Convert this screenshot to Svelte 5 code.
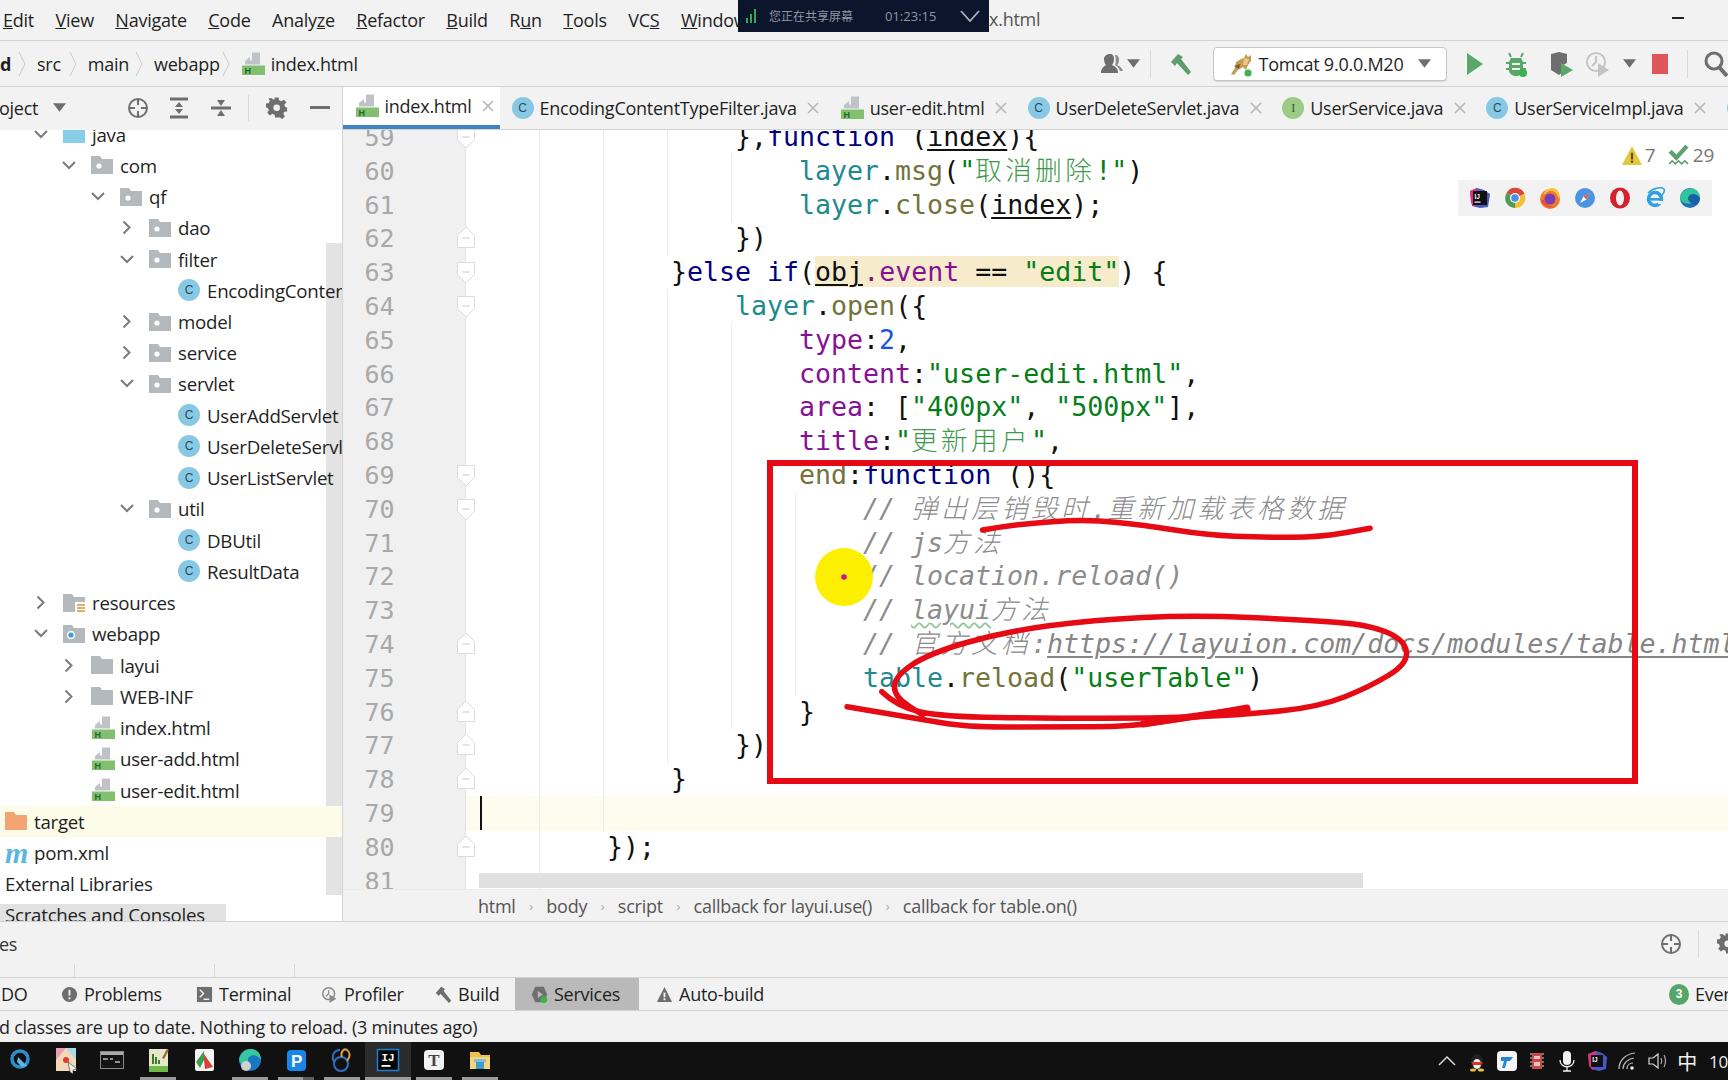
<script>
  const menu = [['Edit',0],['View',0],['Navigate',0],['Code',0],['Analyze',5],['Refactor',0],['Build',0],['Run',1],['Tools',0],['VCS',2],['Window',0]];
  const tabs = [
    {k:'h',t:'index.html',active:true},
    {k:'c',t:'EncodingContentTypeFilter.java'},
    {k:'h',t:'user-edit.html'},
    {k:'c',t:'UserDeleteServlet.java'},
    {k:'i',t:'UserService.java'},
    {k:'c',t:'UserServiceImpl.java'},
    {k:'c',t:''}
  ];
  const tree = [
    {x:63,i:'java',t:'java',c:'o'},
    {x:91,i:'pkg',t:'com',c:'o'},
    {x:120,i:'pkg',t:'qf',c:'o'},
    {x:149,i:'pkg',t:'dao',c:'c'},
    {x:149,i:'pkg',t:'filter',c:'o'},
    {x:178,i:'cls',t:'EncodingContentTypeFilter'},
    {x:149,i:'pkg',t:'model',c:'c'},
    {x:149,i:'pkg',t:'service',c:'c'},
    {x:149,i:'pkg',t:'servlet',c:'o'},
    {x:178,i:'cls',t:'UserAddServlet'},
    {x:178,i:'cls',t:'UserDeleteServlet'},
    {x:178,i:'cls',t:'UserListServlet'},
    {x:149,i:'pkg',t:'util',c:'o'},
    {x:178,i:'cls',t:'DBUtil'},
    {x:178,i:'cls',t:'ResultData'},
    {x:63,i:'res',t:'resources',c:'c'},
    {x:63,i:'web',t:'webapp',c:'o'},
    {x:91,i:'dir',t:'layui',c:'c'},
    {x:91,i:'dir',t:'WEB-INF',c:'c'},
    {x:91,i:'html',t:'index.html'},
    {x:91,i:'html',t:'user-add.html'},
    {x:91,i:'html',t:'user-edit.html'},
    {x:5,i:'target',t:'target',sel:true},
    {x:5,i:'pom',t:'pom.xml'},
    {x:5,t:'External Libraries'},
    {x:5,t:'Scratches and Consoles',scratch:true}
  ];
  const lines = [
    {n:59,col:16,f:'d',g:[4,8,12],s:[['p','},'],['k','function'],['p',' ('],['u','index'],['p','){']]},
    {n:60,col:20,g:[4,8,12,16],s:[['v','layer'],['p','.'],['m','msg'],['p','('],['st','"'],['cs','取消删除'],['st','!"'],['p',')']]},
    {n:61,col:20,g:[4,8,12,16],s:[['v','layer'],['p','.'],['m','close'],['p','('],['u','index'],['p',');']]},
    {n:62,col:16,f:'u',g:[4,8,12],s:[['p','})']]},
    {n:63,col:12,f:'d',g:[4,8],s:[['p','}'],['k','else if'],['p','('],['hu','obj'],['hp','.event'],['h',' == '],['hs','"edit"'],['p',') {']]},
    {n:64,col:16,f:'d',g:[4,8,12],s:[['v','layer'],['p','.'],['m','open'],['p','({']]},
    {n:65,col:20,g:[4,8,12,16],s:[['pr','type'],['p',':'],['n2','2'],['p',',']]},
    {n:66,col:20,g:[4,8,12,16],s:[['pr','content'],['p',':'],['st','"user-edit.html"'],['p',',']]},
    {n:67,col:20,g:[4,8,12,16],s:[['pr','area'],['p',': ['],['st','"400px"'],['p',', '],['st','"500px"'],['p','],']]},
    {n:68,col:20,g:[4,8,12,16],s:[['pr','title'],['p',':'],['st','"'],['cs','更新用户'],['st','"'],['p',',']]},
    {n:69,col:20,f:'d',g:[4,8,12,16],s:[['m','end'],['p',':'],['k','function'],['p',' (){']]},
    {n:70,col:24,f:'d',g:[4,8,12,16,20],s:[['c','// '],['cc','弹出层销毁时'],['c',','],['cc','重新加载表格数据']]},
    {n:71,col:24,g:[4,8,12,16,20],s:[['c','// js'],['cc','方法']]},
    {n:72,col:24,g:[4,8,12,16,20],s:[['c','// location.reload()']]},
    {n:73,col:24,g:[4,8,12,16,20],s:[['c','// '],['cw','layui'],['cc','方法']]},
    {n:74,col:24,f:'u',g:[4,8,12,16,20],s:[['c','// '],['cc','官方文档'],['c',':'],['cl','https://layuion.com/docs/modules/table.html']]},
    {n:75,col:24,g:[4,8,12,16,20],s:[['v','table'],['p','.'],['m','reload'],['p','('],['st','"userTable"'],['p',')']]},
    {n:76,col:20,f:'u',g:[4,8,12,16],s:[['p','}']]},
    {n:77,col:16,f:'u',g:[4,8,12],s:[['p','})']]},
    {n:78,col:12,f:'u',g:[4,8],s:[['p','}']]},
    {n:79,col:0,cur:true,g:[4,8],s:[]},
    {n:80,col:8,f:'u',g:[4],s:[['p','});']]},
    {n:81,col:0,g:[4],s:[]}
  ];
  const pt = ([x,y]) => [740 + x/1.587, 450 + y/3];
  function smooth(list){
    const p = list.map(pt);
    let d = `M${p[0][0].toFixed(1)} ${p[0][1].toFixed(1)}`;
    for(let i=1;i<p.length-1;i++){
      const mx=(p[i][0]+p[i+1][0])/2, my=(p[i][1]+p[i+1][1])/2;
      d += ` Q${p[i][0].toFixed(1)} ${p[i][1].toFixed(1)} ${mx.toFixed(1)} ${my.toFixed(1)}`;
    }
    const l=p[p.length-1];
    return d+` L${l[0].toFixed(1)} ${l[1].toFixed(1)}`;
  }
  const stroke1 = smooth([[385,240],[440,222],[550,208],[640,225],[740,255],[830,262],[920,262],[1000,235]]);
  const stroke2 = smooth([[225,725],[250,770],[320,800],[500,805],[650,805],[800,795],[920,770],[1000,710],[1060,640],[1055,570],[1000,525],[900,510],[720,495],[560,510],[420,545],[300,610],[245,680],[245,740],[290,795]]);
  const stroke3 = smooth([[170,770],[280,805],[360,832],[500,830],[620,830],[720,800],[805,772]]);
  const stroke4 = smooth([[640,822],[720,798],[805,778]]);
  const tasks = ['swirl','map','cmd','note','wps','edge','p','nav','ij','t','files'];
  const under = {note:1,edge:1,p:2,nav:1,ij:1,t:1,files:1};
</script>

{#snippet htmlIcon()}
  <svg class="ic24" viewBox="0 0 24 24"><path d="M4 12.5 4 9 9 5 9 8.500 11 8.500 11 .5 19 .5 19 12.500Z" fill="#bfc3c7"/><rect x="1" y="13.500" width="23" height="9.500" fill="#82c06f"/><text x="3.500" y="21.500" class="h-letter">H</text></svg>
{/snippet}
{#snippet clsIcon(l='C',g=false)}
  <span class="cicon" class:green={g}>{l}</span>
{/snippet}
{#snippet folder(kind)}
  <svg class="ic22 fld" viewBox="0 0 22 18">
    <path d="M0 0h9l2 3h11v15H0Z" fill={kind==='java'?'#87cde8':kind==='target'?'#f3a473':'#b4b9bd'}/>
    {#if kind==='pkg'}<circle cx="8" cy="10" r="2.600" fill="#fff"/>{/if}
    {#if kind==='web'}<circle cx="8" cy="10" r="4" fill="#fff"/><circle cx="8" cy="10" r="2.600" fill="#3aa0d8"/>{/if}
    {#if kind==='res'}<rect x="12" y="8" width="10" height="10" fill="#fff"/><path d="M14 11h9M14 14h9M14 17h9" stroke="#d9b36a" stroke-width="2"/>{/if}
  </svg>
{/snippet}
{#snippet caretDown()}
  <svg class="dd" viewBox="0 0 12 8"><path d="M0 0h12L6 8Z" fill="#6e6e6e"/></svg>
{/snippet}
{#snippet targetIcon()}
  <svg class="ic22" viewBox="0 0 22 22"><circle cx="11" cy="11" r="9" fill="none" stroke="#6e6e6e" stroke-width="2"/><path d="M11 2v6M11 14v6M2 11h6M14 11h6" stroke="#6e6e6e" stroke-width="2"/></svg>
{/snippet}
{#snippet gear()}
  <svg class="ic22" viewBox="0 0 22 22"><path d="M9 1h4l.6 3 2.300 1 2.600-1.700 2.800 2.800L19 8.700l1 2.300 2 .5v4l-3 .4-1 2.300 1.700 2.500-2.800 2.800-2.500-1.700L14 22H9.500l-.6-3-2.300-1-2.500 1.700-2.800-2.800L3 14.400 2 12l-2-.6v-4l3-.6 1-2.300L2.500 2 5.300 1.500 7.800 3.200 9 3Z" fill="#6e6e6e" transform="translate(0 -.5) scale(.96)"/><circle cx="10.700" cy="10.700" r="3.300" fill="#f2f2f2"/></svg>
{/snippet}
{#snippet hammer(col)}
  <svg class="ic22" viewBox="0 0 22 22"><path d="M1 9 8 1l5 3-2 2 10 13-3 3L7 10 5 13Z" fill={col}/></svg>
{/snippet}

<div class="app">
  <header class="menubar">
    <nav class="menu">
      {#each menu as [label, u]}
        <span class="mi">{label.slice(0,u)}<u>{label[u]}</u>{label.slice(u+1)}</span>
      {/each}
    </nav>
    <span class="title">x.html</span>
    <span class="min"></span>
  </header>

  <div class="navbar">
    <div class="crumbs">
      <b class="cb">d</b><svg class="nchev" viewBox="0 0 8 26"><path d="M1 1l6 12-6 12" fill="none" stroke="#c9c9c9"/></svg>
      <span class="c1">src</span><svg class="nchev" viewBox="0 0 8 26"><path d="M1 1l6 12-6 12" fill="none" stroke="#c9c9c9"/></svg>
      <span class="c2">main</span><svg class="nchev" viewBox="0 0 8 26"><path d="M1 1l6 12-6 12" fill="none" stroke="#c9c9c9"/></svg>
      <span class="c3">webapp</span><svg class="nchev" viewBox="0 0 8 26"><path d="M1 1l6 12-6 12" fill="none" stroke="#c9c9c9"/></svg>
      {@render htmlIcon()}<span class="last">index.html</span>
    </div>
    <div class="tools">
      <svg class="ic24 t-user" viewBox="0 0 24 24"><path d="M10 2c3 0 4 2 4 5 0 3-1 5-2 6 3 1 5 3 6 6v2H1v-2c1-3 3-5 5-6-1-1-2-3-2-6 0-3 3-5 6-5Z" fill="#6e6e6e"/><path d="M15 3c3 0 4 2 4 5s-1 4-2 5c3 1 5 3 6 6h-3c-1-3-3-5-5-6 1-2 1-7 0-10Z" fill="#8c8c8c"/></svg>
      <span class="t-dd">{@render caretDown()}</span>
      <i class="vsep s1"></i>
      <span class="t-ham">{@render hammer('#5e9e6e')}</span>
      <div class="runcfg">
        <svg class="cat" viewBox="0 0 26 26"><path d="M18 3l2 3 3-2v6l-3 4-2 5-3-3-5 3-4 5-3-1 4-6 1-6 5-3 3-1Z" fill="#c59a52"/><path d="M16 7l5 1-2 6-4 0Z" fill="#e6c98a"/><path d="M6 15l6-2-1 5Z" fill="#7a5a2e"/><circle cx="20" cy="22" r="3.500" fill="#3cb34a"/></svg>
        <span>Tomcat 9.0.0.M20</span>
        {@render caretDown()}
      </div>
      <svg class="t-run" viewBox="0 0 16 22"><path d="M0 0l16 11L0 22Z" fill="#59a869"/></svg>
      <svg class="t-dbg" viewBox="0 0 24 26"><path d="M7 6 5 2M17 6l2-4M2 12h20M2 18h20" stroke="#59a869" stroke-width="2"/><path d="M7 7h10l2 4v8c0 4-4 6-7 6s-7-2-7-6v-8Z" fill="#59a869"/><path d="M8 13h8M8 18h8" stroke="#f2f2f2" stroke-width="2"/><circle cx="19" cy="22" r="4" fill="#3cb34a"/></svg>
      <svg class="t-cov" viewBox="0 0 24 26"><path d="M1 3l8-2 8 2v9l-4 2v7l-4 3-8-5Z" fill="#6e6e6e"/><path d="M11 12l12 7-12 7Z" fill="#59a869"/></svg>
      <svg class="t-prof" viewBox="0 0 24 26"><circle cx="10" cy="11" r="9" fill="none" stroke="#c4c4c4" stroke-width="2"/><path d="M10 5v6l-4 4" fill="none" stroke="#c4c4c4" stroke-width="2"/><path d="M12 12l11 7-11 7Z" fill="#c4c4c4"/></svg>
      <span class="t-dd2">{@render caretDown()}</span>
      <svg class="t-stop" viewBox="0 0 16 20"><rect width="16" height="20" fill="#e05558"/></svg>
      <i class="vsep s2"></i>
      <svg class="t-search" viewBox="0 0 24 26"><circle cx="10" cy="10" r="8" fill="none" stroke="#6e6e6e" stroke-width="3"/><path d="M15 16l8 9" stroke="#6e6e6e" stroke-width="4"/></svg>
    </div>
  </div>

  <div class="main">
    <aside class="side">
      <div class="side-head">
        <span class="ptitle">oject</span>
        <span class="p-dd">{@render caretDown()}</span>
        <span class="p-a">{@render targetIcon()}</span>
        <svg class="p-b ic22" viewBox="0 0 22 22"><path d="M2 2h18M2 20h18" stroke="#6e6e6e" stroke-width="3"/><path d="M11 5l4 5H7ZM11 17l4-5H7Z" fill="#6e6e6e"/></svg>
        <svg class="p-c ic22" viewBox="0 0 22 22"><path d="M1 11h20" stroke="#6e6e6e" stroke-width="3"/><path d="M11 9 7 3h8ZM11 13l4 6H7Z" fill="#6e6e6e"/></svg>
        <i class="p-sep"></i>
        <span class="p-d">{@render gear()}</span>
        <i class="p-min"></i>
      </div>
      <div class="tree">
        <i class="vscroll"></i>
        {#each tree as r}
          <div class="row" class:sel={r.sel} class:scratch={r.scratch} style:padding-left="{r.x>=29 ? r.x-29 : r.x}px">
            {#if r.x>=29}
              <span class="chev">
                {#if r.c==='o'}<svg viewBox="0 0 14 9"><path d="M1 1l6 6 6-6" fill="none" stroke="#7b7b7b" stroke-width="2"/></svg>
                {:else if r.c==='c'}<svg class="rc" viewBox="0 0 14 9"><path d="M1 1l6 6 6-6" fill="none" stroke="#7b7b7b" stroke-width="2"/></svg>{/if}
              </span>
            {/if}
            {#if r.i==='cls'}{@render clsIcon()}
            {:else if r.i==='html'}{@render htmlIcon()}
            {:else if r.i==='pom'}<span class="pom">m</span>
            {:else if r.i}{@render folder(r.i)}{/if}
            <span class="lbl" class:html={r.i==='html'} class:bare={!r.i}>{r.t}</span>
          </div>
        {/each}
      </div>
    </aside>

    <section class="center">
      <div class="tabs">
        {#each tabs as tb}
          <div class="tab" class:active={tb.active}>
            {#if tb.k==='h'}{@render htmlIcon()}{:else}{@render clsIcon(tb.k==='i'?'I':'C', tb.k==='i')}{/if}
            <span class="tname">{tb.t}</span>
            {#if tb.t}<svg class="tx" viewBox="0 0 12 12"><path d="M1 1l10 10M11 1 1 11" stroke="#b4b4b4" stroke-width="1.500"/></svg>{/if}
          </div>
        {/each}
      </div>

      <div class="editor">
        <div class="lines">
          {#each lines as l}
            <div class="line" class:cur={l.cur}>
              <span class="num">{l.n}</span>
              <div class="code">
                {#each l.g as g}<i class="guide" style:left="{g*16+9}px"></i>{/each}
                {#if l.f}
                  <svg class="fold" viewBox="0 0 18 24">
                    {#if l.f==='d'}<path d="M.5 2.500h17v12L9 23 .5 14.500Z" fill="#fff" stroke="#dcdcdc"/>
                    {:else}<path d="M.5 21.500h17v-12L9 1 .5 9.500Z" fill="#fff" stroke="#dcdcdc"/>{/if}
                    <path d="M5.500 12h7" stroke="#c8c8c8"/>
                  </svg>
                {/if}
                {#if l.cur}<i class="caret"></i>{/if}
                <span class="txt" style:left="{l.col*16+13}px">{#each l.s as [c,t]}<span class={c}>{t}</span>{/each}</span>
              </div>
            </div>
          {/each}
        </div>
        <i class="hscroll"></i>
        <div class="inspect">
          <svg class="warn" viewBox="0 0 18 17"><path d="M9 0l9 17H0Z" fill="#e3c93a"/><path d="M8 6h2v6H8ZM8 13h2v2H8Z" fill="#5a5020"/></svg>
          <span class="n7">7</span>
          <svg class="chk" viewBox="0 0 20 20"><path d="M2 6l6 6L18 1" fill="none" stroke="#5f9e73" stroke-width="4"/><path d="M1 18l3-3 3 3 3-3 3 3 3-3 3 3" fill="none" stroke="#5f9e73" stroke-width="1.500"/></svg>
          <span>29</span>
        </div>
        <div class="browsers">
          <svg viewBox="0 0 22 22"><path d="M1 4l7-3 7 2 6 4-2 13-8 1-8-2Z" fill="#4858c8"/><path d="M1 4l7-3 2 8-4 11-4-4Z" fill="#e0337c"/><rect x="4" y="4" width="14" height="14" fill="#111"/><text x="5.500" y="11.500" class="tiny">IJ</text><rect x="5.500" y="14.500" width="6" height="1.200" fill="#fff"/></svg>
          <svg viewBox="0 0 22 22"><path d="M11 11 2.500 6A10 10 0 0 1 20.500 7Z" fill="#d9473b"/><path d="M11 11 20.500 7A10 10 0 0 1 11 21Z" fill="#f3c031"/><path d="M11 11v10A10 10 0 0 1 2.500 6Z" fill="#4b9e54"/><circle cx="11" cy="11" r="5" fill="#fff"/><circle cx="11" cy="11" r="3.800" fill="#4d8fe6"/></svg>
          <svg viewBox="0 0 22 22"><circle cx="11" cy="12" r="10" fill="#f17a2a"/><path d="M4 8C7 1 14 0 17 2c4 3 4 8 3 11C19 7 15 3 10 4Z" fill="#f7c33c"/><circle cx="11" cy="12" r="5.500" fill="#7a3bb8"/><path d="M2 13c2 6 8 9 14 7-5 0-9-2-11-7Z" fill="#e64c3c"/></svg>
          <svg viewBox="0 0 22 22"><circle cx="11" cy="11" r="10" fill="#4c93e0"/><path d="M16 6 12.500 12.500 6 16 9.500 9.500Z" fill="#fff"/><path d="M16 6 12.500 12.500 9.500 9.500Z" fill="#e2574c"/></svg>
          <svg viewBox="0 0 22 22"><ellipse cx="11" cy="11" rx="10" ry="10.500" fill="#d5202e"/><ellipse cx="11" cy="11" rx="4" ry="7.500" fill="#f0f0f0"/></svg>
          <svg viewBox="0 0 22 22"><circle cx="11" cy="12" r="6.500" fill="none" stroke="#2e9fe0" stroke-width="3.500"/><rect x="5" y="11" width="12" height="2.600" fill="#2e9fe0"/><rect x="14" y="14" width="8" height="3" fill="#f0f0f0"/><path d="M4 6c6-6 14-6 16-4 1 2 0 4-2 6" fill="none" stroke="#2e9fe0" stroke-width="1.500"/></svg>
          <svg viewBox="0 0 22 22"><circle cx="11" cy="11" r="10" fill="#1e6fb5"/><path d="M1 11C2 3 11-1 17 3c3 2 4 5 4 8-3-4-8-5-11-2-2 3 0 6 3 7-6 2-11-1-12-5Z" fill="#30c49b"/><path d="M10 9c3-3 8-2 11 2 0 5-5 9-8 5-3-1-5-4-3-7Z" fill="#1a5ea8"/></svg>
        </div>
      </div>

      <div class="breadbar">
        <span>html</span><em>›</em><span>body</span><em>›</em><span>script</span><em>›</em><span>callback for layui.use()</span><em>›</em><span>callback for table.on()</span>
      </div>
    </section>
  </div>

  <div class="svcbar">
    <span class="svct">es</span>
    <span class="sv-a">{@render targetIcon()}</span>
    <i class="sv-sep"></i>
    <span class="sv-b">{@render gear()}</span>
    <i class="tick t1"></i><i class="tick t2"></i><i class="tick t3"></i>
  </div>

  <div class="toolwin">
    <span class="tw w0">DO</span>
    <span class="tw w1"><svg viewBox="0 0 18 18"><circle cx="9" cy="9" r="8" fill="#6e6e6e"/><path d="M8 4h2v6H8ZM8 12h2v2H8Z" fill="#f2f2f2"/></svg>Problems</span>
    <span class="tw w2"><svg viewBox="0 0 18 18"><rect x="1" y="1" width="16" height="16" fill="#6e6e6e"/><path d="M4 4l4 4-4 4M8 14h6" fill="none" stroke="#f2f2f2" stroke-width="1.500"/></svg>Terminal</span>
    <span class="tw w3"><svg viewBox="0 0 18 20"><circle cx="8" cy="9" r="7" fill="none" stroke="#8a8a8a" stroke-width="1.800"/><path d="M8 5v4l-3 3" fill="none" stroke="#8a8a8a" stroke-width="1.500"/><path d="M9 10l8 5-8 5Z" fill="#8a8a8a"/></svg>Profiler</span>
    <span class="tw w4"><svg viewBox="0 0 22 22"><path d="M1 9 8 1l5 3-2 2 10 13-3 3L7 10 5 13Z" fill="#6e6e6e"/></svg>Build</span>
    <span class="tw w5 on"><svg viewBox="0 0 20 20"><path d="M5 1h10l4 9-4 9H5l-4-9Z" fill="#6e6e6e"/><path d="M8 6l6 4-6 4Z" fill="#b9b9b9"/><circle cx="15" cy="16" r="4" fill="#3cb34a"/></svg>Services</span>
    <span class="tw w6"><svg viewBox="0 0 18 18"><path d="M9 1l8 16H1Z" fill="#6e6e6e"/><path d="M8 7h2v5H8ZM8 13h2v2H8Z" fill="#f2f2f2"/></svg>Auto-build</span>
    <span class="tw ev"><b>3</b>Event Log</span>
  </div>

  <div class="status">d classes are up to date. Nothing to reload. (3 minutes ago)</div>

  <footer class="taskbar">
    {#each tasks as t}
      <div class="tb" class:on={t==='ij'}>
        <svg viewBox="0 0 28 28">
          {#if t==='swirl'}<circle cx="14" cy="13" r="8" fill="none" stroke="#2f8fcb" stroke-width="3.500"/><path d="M12 11l9 9-5 1-5-5Z" fill="#5db8e6"/>
          {:else if t==='map'}<rect x="4" y="2" width="20" height="23" fill="#f2d9b5"/><path d="M4 2h10L4 14Z" fill="#e9a0b0"/><path d="M24 2v12L14 2Z" fill="#a9d8e8"/><circle cx="14" cy="14" r="3" fill="#e03a3a"/><path d="M16 16l9 7-4 1 0 4-3-2Z" fill="#eee" stroke="#333" stroke-width=".600"/>
          {:else if t==='cmd'}<rect x="2.500" y="5.500" width="23" height="17" fill="#151515" stroke="#8a8a8a"/><rect x="3" y="6" width="22" height="3" fill="#aaa"/><path d="M5 13h5M12 13h3M17 16h5" stroke="#bbb" stroke-width="1.500"/>
          {:else if t==='note'}<rect x="5" y="3" width="19" height="23" fill="#e8e8c8"/><rect x="5" y="20" width="19" height="6" fill="#6fb84a"/><path d="M9 18V8M12 18V11M15 18v-4" stroke="#3c7a2e" stroke-width="2"/><path d="M18 12l5-9 2 1-5 9Z" fill="#8a6d3b"/>
          {:else if t==='wps'}<rect x="5" y="3" width="19" height="22" rx="2" fill="#f4f4f4"/><path d="M14 5 6 16l4 6 4-8Z" fill="#3e9e4c"/><path d="M14 8l9 13-8 2-1-9Z" fill="#d9423a"/>
          {:else if t==='edge'}<circle cx="14" cy="14" r="11" fill="#1a78c2"/><path d="M3 14C4 5 14 0 21 5c3 2 4 6 4 9-3-5-9-6-12-3-2 3-1 6 2 8-6 2-11-1-12-5Z" fill="#36c6a0"/><circle cx="10" cy="20" r="5" fill="#d0d0d0"/>
          {:else if t==='p'}<rect x="5" y="4" width="19" height="21" rx="4" fill="#1a86e8"/><text x="9" y="21" class="ptext">P</text>
          {:else if t==='nav'}<path d="M6 16c-3-6 0-12 6-12" fill="none" stroke="#2f6fc0" stroke-width="2"/><circle cx="13" cy="18" r="7" fill="none" stroke="#2f6fc0" stroke-width="2"/><path d="M14 11c-2-5 2-9 5-7s4 6 0 11" fill="none" stroke="#e0a040" stroke-width="2"/>
          {:else if t==='ij'}<rect x="3.500" y="3.500" width="21" height="21" fill="#050505" stroke="#1f7fd6" stroke-width="1.500"/><text x="7.500" y="15" class="ijtext">IJ</text><rect x="7.500" y="19" width="9" height="1.800" fill="#fff"/>
          {:else if t==='t'}<rect x="4" y="4" width="20" height="20" rx="4" fill="#f2f2f2"/><text x="14" y="20" class="ttext">T</text>
          {:else}<path d="M4 6h9l2 3h9v4H4Z" fill="#f0c24a"/><rect x="4" y="11" width="20" height="12" fill="#f5d67a"/><rect x="10" y="15" width="8" height="8" fill="#3f9bd0"/><rect x="8" y="13" width="12" height="3" fill="#7fc0e0"/>{/if}
        </svg>
        {#if under[t]}<i class="ul" class:ul2={under[t]===2}></i>{/if}
      </div>
    {/each}
    <div class="tray">
      <span class="ti"><svg viewBox="0 0 22 22"><path d="M3 15l8-8 8 8" fill="none" stroke="#d8d8d8" stroke-width="1.500"/></svg></span>
      <span class="ti"><svg viewBox="0 0 22 22"><ellipse cx="11" cy="12" rx="6" ry="8" fill="#222"/><ellipse cx="11" cy="14" rx="4" ry="5" fill="#f2f2f2"/><path d="M5 12h12l-2 3H7Z" fill="#d8352a"/><ellipse cx="7" cy="20" rx="3" ry="1.500" fill="#f0c040"/><ellipse cx="15" cy="20" rx="3" ry="1.500" fill="#f0c040"/></svg></span>
      <span class="ti"><svg viewBox="0 0 22 22"><rect width="20" height="20" x="1" y="1" rx="4" fill="#f6f6f6"/><path d="M5 7h12l-3 4h-3l-2 7-3 0 2-7H5Z" fill="#1e88d8"/></svg></span>
      <span class="ti"><svg viewBox="0 0 22 22"><rect x="6" y="3" width="10" height="16" fill="#c9494b"/><rect x="8" y="6" width="6" height="3" fill="#f0c0c0"/><rect x="8" y="12" width="6" height="4" fill="#f0c0c0"/><path d="M5 3v16M17 3v16" stroke="#ddd" stroke-dasharray="2 2"/></svg></span>
      <span class="ti"><svg viewBox="0 0 22 22"><rect x="7" y="1" width="8" height="14" rx="4" fill="#f2f2f2"/><path d="M4 10c0 9 14 9 14 0M11 16v5M7 21h8" fill="none" stroke="#f2f2f2" stroke-width="1.300"/></svg></span>
      <span class="ti"><svg viewBox="0 0 22 22"><path d="M2 4l8-3 6 2 5 4-1 12-7 2-8-2Z" fill="#4858c8"/><path d="M2 4l8-3 1 8-4 11-4-4Z" fill="#d9337c"/><rect x="5" y="5" width="12" height="12" fill="#111"/><text x="6.300" y="11.500" class="tiny">IJ</text></svg></span>
      <span class="ti"><svg viewBox="0 0 22 22"><path d="M3 19C3 10 10 4 19 3M7 19c0-6 5-10 11-11M11 19c0-3 2-6 6-6" fill="none" stroke="#bdbdbd" stroke-width="1.200"/><circle cx="16" cy="18" r="1.800" fill="#eee"/></svg></span>
      <span class="ti"><svg viewBox="0 0 22 22"><path d="M3 8h4l5-4v14l-5-4H3Z" fill="none" stroke="#d8d8d8" stroke-width="1.200"/><path d="M15 8c1 2 1 4 0 6M18 5c2 4 2 8 0 12" fill="none" stroke="#a8a8a8" stroke-width="1.200"/></svg></span>
      <span class="ti zh">中</span>
    </div>
    <span class="clock">10</span>
  </footer>

  <div class="share">
    <svg class="sig" viewBox="0 0 10 14"><path d="M0 9h2v5H0ZM4 5h2v9H4ZM8 0h2v14H8Z" fill="#3aa35a"/></svg>
    <span class="sh-t">您正在共享屏幕</span>
    <span class="sh-time">01:23:15</span>
    <svg class="sh-chev" viewBox="0 0 20 12"><path d="M1 1l9 10 9-10" fill="none" stroke="#aab0bc" stroke-width="1.800"/></svg>
  </div>

  <svg class="marks" viewBox="0 0 1728 1080">
    <circle class="spot" cx="844" cy="577" r="29"/>
    <circle cx="844" cy="577" r="2.800" fill="#d0148c"/>
    <rect x="770" y="463" width="865" height="318" fill="none" stroke="#e60a14" stroke-width="6"/>
    <path d={stroke1} class="pen p1"/>
    <path d={stroke2} class="pen p2"/>
    <path d={stroke3} class="pen p2"/>
    <path d={stroke4} class="pen p3"/>
  </svg>
</div>

<style>
  :global(body){margin:0;background:#f2f2f2;overflow:hidden}
  .app{position:relative;width:1728px;height:1080px;overflow:hidden;display:flex;flex-direction:column;background:#f2f2f2;color:#1f1f1f;font-family:"Open Sans","Noto Sans CJK SC",sans-serif;font-size:18px;letter-spacing:-.25px}
  svg{display:block;flex:none}
  i{display:block;font-style:normal}
  .ic24{width:24px;height:24px}
  .ic22{width:22px;height:22px}
  .fld{height:18px}
  .dd{width:13px;height:9px}
  .h-letter{font:700 9px "Liberation Sans",sans-serif;fill:#1f6b2c;letter-spacing:0}
  .cicon{flex:none;width:22px;height:22px;border-radius:50%;background:#87c9e4;color:#2c4a5c;font:12px/22px "Liberation Sans",sans-serif;text-align:center;letter-spacing:0}
  .cicon.green{background:#9ccb86;color:#35562c;font-family:"Liberation Serif",serif}

  .menubar{height:41px;flex:none;box-sizing:border-box;border-bottom:1px solid #d3d3d3;display:grid;grid-template-columns:989px 1fr auto;align-items:center}
  .menu{display:flex;gap:21.500px;padding-left:3px;overflow:hidden;white-space:nowrap}
  .title{color:#555;margin-bottom:3px}
  .min{width:12px;height:2px;background:#222;margin:0 44px 4px 0}

  .navbar{height:46px;flex:none;box-sizing:border-box;border-bottom:1px solid #d3d3d3;display:flex;align-items:center;justify-content:space-between}
  .crumbs{display:flex;align-items:center}
  .cb{width:16px}
  .nchev{width:8px;height:26px;margin:0 11px 0 2px}
  .c1{margin-right:6px}
  .c2{margin-right:4px}
  .c3{margin-right:0}
  .crumbs .last{margin-left:6px}
  .tools{display:flex;align-items:center;height:45px;position:relative;width:638px}
  .t-user{margin-left:10px}
  .t-dd{margin-left:3px}
  .vsep{width:1px;height:28px;background:#d8d8d8}
  .s1{margin-left:10px}
  .t-ham{margin-left:19px}
  .runcfg{margin-left:21px;width:234px;height:34px;box-sizing:border-box;border:1px solid #c6c6c6;border-radius:4px;background:#fff;display:flex;align-items:center;padding:0 15px 0 14px;box-shadow:0 1px 0 #d8d8d8;flex:none}
  .runcfg span{flex:1;margin-left:5px;white-space:nowrap}
  .cat{width:26px;height:26px}
  .t-run{width:16px;height:22px;margin-left:20px}
  .t-dbg{width:24px;height:26px;margin-left:21px}
  .t-cov{width:24px;height:26px;margin-left:22px}
  .t-prof{width:24px;height:26px;margin-left:12px}
  .t-dd2{margin-left:13px}
  .t-stop{width:16px;height:20px;margin-left:16px}
  .s2{margin-left:19px}
  .t-search{width:24px;height:26px;margin-left:17px}

  .main{height:835px;flex:none;box-sizing:border-box;border-bottom:1px solid #d3d3d3;display:flex;overflow:hidden}
  .side{width:343px;flex:none;display:flex;flex-direction:column;box-sizing:border-box;border-right:1px solid #d3d3d3;overflow:hidden}
  .side-head{height:43px;flex:none;box-sizing:border-box;display:flex;align-items:center;position:relative;z-index:2;background:#f2f2f2;padding-bottom:2px}
  .ptitle{width:54px;margin-left:-1px}
  .p-dd{width:13px}
  .p-a{margin-left:61px}
  .p-b{margin-left:19px}
  .p-c{margin-left:20px}
  .p-sep{width:1px;height:26px;background:#d8d8d8;margin-left:16px}
  .p-d{margin-left:17px}
  .p-min{width:20px;height:3px;background:#6e6e6e;margin-left:22px}
  .tree{flex:1;background:#fff;position:relative;overflow:hidden}
  .vscroll{position:absolute;left:326px;top:113px;width:16px;height:652px;background:#e3e3e3}
  .row{position:relative;height:31.240px;display:flex;align-items:center;white-space:nowrap;overflow:hidden;font-size:18.700px}
  .row:first-of-type{margin-top:-11.500px}
  .chev{width:29px;flex:none;display:flex;justify-content:flex-start}
  .chev svg{width:14px;height:9px}
  .chev .rc{transform:rotate(-90deg)}
  .lbl{margin-left:7px}
  .lbl.html{margin-left:5px}
  .lbl.bare{margin-left:0}
  .sel{background:#fdfce9}
  .scratch{width:226px;height:22px;box-sizing:border-box;margin-top:4.500px;background:#e1e1e1;align-items:flex-start;line-height:22px}
  .pom{width:22px;flex:none;color:#5bb8dc;font:italic 700 30px/31px "Liberation Serif",serif;letter-spacing:-1px}

  .center{flex:1;min-width:0;display:flex;flex-direction:column}
  .tabs{height:43px;flex:none;box-sizing:border-box;border-bottom:1px solid #d3d3d3;display:flex;overflow:hidden;white-space:nowrap}
  .tab{display:flex;align-items:center;padding:0 9px 0 11.500px;height:42px;box-sizing:border-box;flex:none}
  .tab.active{background:#fff;border-bottom:5px solid #4083c4;height:43px;padding-right:6px}
  .tname{margin-left:6px}
  .tx{width:12px;height:12px;margin-left:10.500px}

  .editor{flex:1;background:#fff;position:relative;overflow:hidden;min-height:0}
  .lines{margin-top:-10px}
  .line{display:grid;grid-template-columns:123px 1fr;height:33.800px}
  .num{background:#f0f0f0;border-right:1px solid #e4e4e4;box-sizing:border-box;font:25px/33.800px "DejaVu Sans Mono",monospace;color:#a8a8a8;padding:1px 0 0 21.500px;letter-spacing:0}
  .code{position:relative;font:26.600px/33.800px "DejaVu Sans Mono","Noto Sans CJK SC",monospace;color:#111;letter-spacing:0;min-width:0}
  .cur .code{background:#fdfcef}
  .guide{position:absolute;top:0;bottom:0;width:1px;background:#ececec}
  .fold{position:absolute;left:-9.500px;top:5px;width:18px;height:24px}
  .caret{position:absolute;left:13.500px;top:0;width:2.500px;height:33.800px;background:#111}
  .txt{position:absolute;top:0;white-space:pre}
  .k{color:#000080}
  .u{text-decoration:underline;text-underline-offset:3px;text-decoration-thickness:2px}
  .v{color:#20898e}
  .m{color:#73733a}
  .st,.hs{color:#067d17}
  .cs{color:#3f9a4b;letter-spacing:3.400px;font-weight:300}
  .n2{color:#1750eb}
  .pr,.hp{color:#871094}
  .hu,.hp,.h,.hs{background:#f6eccb}
  .hu{text-decoration:underline;text-underline-offset:3px;text-decoration-thickness:2px}
  .p{color:#111}
  .c,.cc,.cw,.cl{color:#8c8c8c;font-style:italic}
  .cc{letter-spacing:3.400px;font-weight:300}
  .cw{text-decoration:underline wavy #93c99a 1.500px;text-underline-offset:3px}
  .cl{text-decoration:underline;text-decoration-thickness:2px;text-underline-offset:3px;color:#858585}
  .hscroll{position:absolute;left:136px;top:743px;width:884px;height:15px;background:#e0e0e0}
  .inspect{position:absolute;top:12px;right:14px;display:flex;align-items:center;color:#777;font-size:19px}
  .inspect .warn{width:20px;height:19px}
  .n7{margin:0 12.500px 0 3px}
  .inspect .chk{width:21px;height:21px;margin-right:4px}
  .browsers{position:absolute;left:1115px;top:50px;width:254px;height:36px;background:#f2f2f2;display:flex;align-items:center;gap:13px;padding-left:11px;box-sizing:border-box}
  .browsers svg{width:22px;height:22px}
  .tiny{font:700 6.500px "Liberation Sans",sans-serif;fill:#fff;letter-spacing:0}
  .ptext{font:700 17px "Liberation Sans",sans-serif;fill:#fff;letter-spacing:0}
  .ijtext{font:700 11px "Liberation Mono",monospace;fill:#fff;letter-spacing:0}
  .ttext{font:700 17px "Liberation Serif",serif;fill:#444;text-anchor:middle;letter-spacing:0}

  .breadbar{height:32px;flex:none;display:flex;align-items:center;padding-left:135px;color:#555;white-space:nowrap;border-top:1px solid #ebebeb;box-sizing:border-box}
  .breadbar em{font-style:normal;color:#aaa;font-size:13px;margin:0 13.500px}

  .svcbar{height:55px;flex:none;position:relative;display:flex;align-items:center;padding-bottom:11px;box-sizing:border-box}
  .svct{width:1661px;flex:none;margin-left:-1px;color:#333}
  .sv-a{width:22px;flex:none}
  .sv-sep{width:1px;height:28px;background:#d8d8d8;margin-left:16px;flex:none}
  .sv-b{margin-left:18px;flex:none}
  .tick{position:absolute;bottom:0;width:1px;height:13px;background:#d8d8d8}
  .t1{left:74px}.t2{left:214px}.t3{left:294px}

  .toolwin{height:34px;flex:none;box-sizing:border-box;border-top:1px solid #d3d3d3;border-bottom:1px solid #d3d3d3;display:flex;align-items:stretch;position:relative;white-space:nowrap}
  .tw{display:flex;align-items:center;gap:6px;flex:none;box-sizing:border-box}
  .tw svg{width:17px;height:17px}
  .w0{margin-left:1px;width:60px}
  .w1{width:135px}
  .w2{width:125px}
  .w3{width:114px}
  .w4{width:80px}
  .w5{width:124px;padding-left:16px}
  .w5.on{background:#b9b9b9}
  .w6{margin-left:17px}
  .ev{margin-left:auto;width:59px;overflow:hidden}
  .ev b{flex:none;width:20px;height:21px;border-radius:50%;background:#57a56a;color:#fff;font:700 12px/21px "Liberation Sans",sans-serif;text-align:center;letter-spacing:0}

  .status{height:31px;flex:none;display:flex;align-items:center;white-space:nowrap;margin-left:-1px}

  .taskbar{height:38px;flex:none;background:#111;display:flex;align-items:stretch;position:relative;color:#eee}
  .tb{width:46px;flex:none;position:relative;display:flex;align-items:center;justify-content:center}
  .tb:first-child{margin-left:-3px}
  .tb svg{width:28px;height:28px;margin-top:-2px}
  .tb.on{background:#2b2b2b}
  .ul{position:absolute;bottom:0;left:5px;right:5px;height:3px;background:#9a9a9a}
  .ul2{background:linear-gradient(90deg,#9a9a9a 70%,#5e5e5e 70%)}
  .tb.on .ul{left:0;right:0}
  .tray{margin-left:auto;display:flex;align-items:center}
  .ti{width:30px;display:flex;justify-content:center}
  .ti svg{width:22px;height:22px}
  .zh{font:20px "Noto Sans CJK SC",sans-serif;color:#f2f2f2}
  .clock{width:19px;margin-left:7px;align-self:center;overflow:hidden;font-size:17px;color:#eee;white-space:nowrap}

  .share{position:absolute;left:738px;top:0;width:251px;height:32px;background:#0b152b;display:flex;align-items:center;color:#8f96a5;font-size:12px;letter-spacing:0;z-index:5}
  .sig{width:10px;height:14px;margin-left:8px}
  .sh-t{margin-left:13px;width:116px}
  .sh-time{font-size:13px;width:75px}
  .sh-chev{width:20px;height:12px}

  .marks{position:absolute;left:0;top:0;width:1728px;height:1080px;pointer-events:none;z-index:4}
  .spot{fill:#fcf000;mix-blend-mode:multiply}
  .pen{fill:none;stroke:#e60a14;stroke-linecap:round;stroke-linejoin:round}
  .p1{stroke-width:5.500}
  .p2{stroke-width:5.500}
  .p3{stroke-width:7}
</style>
